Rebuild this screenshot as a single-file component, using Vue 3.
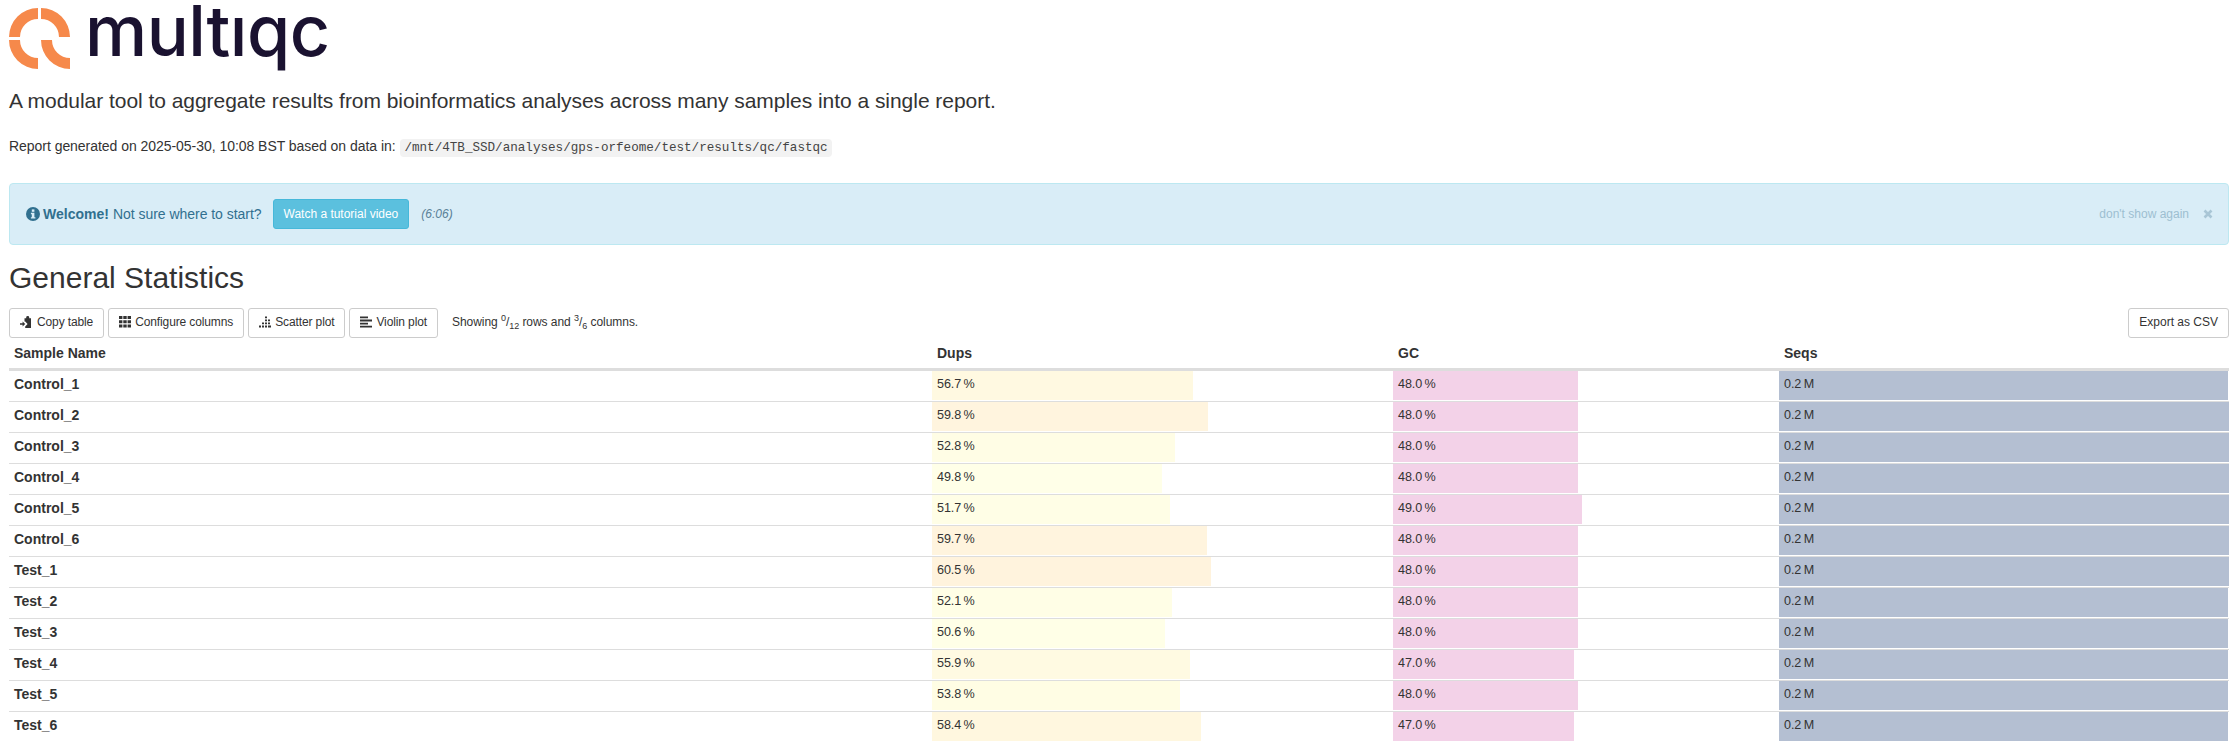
<script setup>
// rows of the general stats table
const rows = [
  { name: 'Control_1', dups: 56.7, gc: 48, seqs: 99.7 },
  { name: 'Control_2', dups: 59.8, gc: 48, seqs: 100 },
  { name: 'Control_3', dups: 52.8, gc: 48, seqs: 100 },
  { name: 'Control_4', dups: 49.8, gc: 48, seqs: 100 },
  { name: 'Control_5', dups: 51.7, gc: 49, seqs: 100 },
  { name: 'Control_6', dups: 59.7, gc: 48, seqs: 100 },
  { name: 'Test_1', dups: 60.5, gc: 48, seqs: 100 },
  { name: 'Test_2', dups: 52.1, gc: 48, seqs: 99.8 },
  { name: 'Test_3', dups: 50.6, gc: 48, seqs: 99.8 },
  { name: 'Test_4', dups: 55.9, gc: 47, seqs: 99.8 },
  { name: 'Test_5', dups: 53.8, gc: 48, seqs: 99.8 },
  { name: 'Test_6', dups: 58.4, gc: 47, seqs: 99.8 }
]

// pale yellow to pale orange, like the report's colour scale
const dupsColour = (v) => {
  const t = (v - 49.8) / (60.5 - 49.8)
  const g = Math.round(255 - Math.pow(t, 1.6) * 12)
  const b = Math.round(232 - t * 11)
  return `rgb(255, ${g}, ${b})`
}
</script>

<template>
  <div class="page">
    <div class="brand">
      <svg class="logo" width="70" height="76" viewBox="9 0 70 76">
        <path d="M9 37A29 29 0 0 1 38 8V19A18 18 0 0 0 20 37Z" />
        <path d="M41 8A29 29 0 0 1 70 37H59A18 18 0 0 0 41 19Z" />
        <path d="M9 40H20A18 18 0 0 0 38 58V69A29 29 0 0 1 9 40Z" />
        <path d="M41 40H52A18 18 0 0 0 70 58V69A29 29 0 0 1 41 40Z" />
      </svg>
      <span class="wordmark">multıqc</span>
    </div>

    <p class="lead">A modular tool to aggregate results from bioinformatics analyses across many samples into a single report.</p>
    <p class="generated">
      Report generated on 2025-05-30, 10:08 BST based on data in:
      <code>/mnt/4TB_SSD/analyses/gps-orfeome/test/results/qc/fastqc</code>
    </p>

    <div class="alert">
      <svg class="info" width="14" height="14" viewBox="0 0 14 14">
        <circle cx="7" cy="7" r="7" fill="#31708f" />
        <rect x="5.8" y="2.4" width="2.6" height="2.4" fill="#d9edf7" />
        <path d="M4.9 5.8H8.4V10.2H9.4V11.6H4.9V10.2H5.8V7.2H4.9Z" fill="#d9edf7" />
      </svg>
      <strong>Welcome!</strong>
      <span class="ask">Not sure where to start?</span>
      <a class="watch">Watch a tutorial video</a>
      <em class="length">(6:06)</em>
      <span class="dismiss">don't show again</span>
      <svg class="close" width="10" height="10" viewBox="0 0 10 10">
        <path d="M1.5 1.5L8.5 8.5M8.5 1.5L1.5 8.5" stroke="#a9c6d6" stroke-width="2.6" />
      </svg>
    </div>

    <h1>General Statistics</h1>

    <div class="toolbar">
      <button class="btn">
        <svg width="13" height="12" viewBox="0 0 13 12" fill="#333">
          <path d="M4.5 2.2H6.2V1.2Q6.2 0 7.7 0T9.2 1.2V2.2H11V12H5.2V10.6L7.6 8 5.2 5.4H4.5Z" />
          <path d="M0 7.2H2.6V5.6L5.2 8 2.6 10.4V8.8H0Z" />
        </svg>
        Copy table
      </button>
      <button class="btn">
        <svg width="12" height="12" viewBox="0 0 12 12" fill="#333">
          <path d="M0 0H3.4V3H0ZM4.3 0H7.7V3H4.3ZM8.6 0H12V3H8.6ZM0 4.3H3.4V7.3H0ZM4.3 4.3H7.7V7.3H4.3ZM8.6 4.3H12V7.3H8.6ZM0 8.6H3.4V11.6H0ZM4.3 8.6H7.7V11.6H4.3ZM8.6 8.6H12V11.6H8.6Z" />
        </svg>
        Configure columns
      </button>
      <button class="btn">
        <svg width="12" height="12" viewBox="0 0 12 12" fill="#333">
          <path d="M6 .5H8V2.3H6ZM6 3.5H8V5.3H6ZM9 3.5H11V5.3H9ZM3 6.5H5V8.3H3ZM6 6.5H8V8.3H6ZM9 6.5H11V8.3H9ZM0 9.5H2V11.5H0ZM3 9.5H5V11.5H3ZM6 9.5H8V11.5H6ZM9 9.5H12V11.5H9Z" />
        </svg>
        Scatter plot
      </button>
      <button class="btn">
        <svg width="12" height="12" viewBox="0 0 12 12" fill="#333">
          <path d="M0 .5H8V2.3H0ZM0 3.6H12V5.4H0ZM0 6.7H8V8.5H0ZM0 9.8H12V11.6H0Z" />
        </svg>
        Violin plot
      </button>
      <span class="showing">
        Showing <sup>0</sup>/<sub>12</sub> rows and <sup>3</sup>/<sub>6</sub> columns.
      </span>
      <button class="btn export">Export as CSV</button>
    </div>

    <table>
      <colgroup>
        <col class="c-name" />
        <col class="c-dups" />
        <col class="c-gc" />
        <col class="c-seqs" />
      </colgroup>
      <thead>
        <tr>
          <th>Sample Name</th>
          <th>Dups</th>
          <th>GC</th>
          <th>Seqs</th>
        </tr>
      </thead>
      <tbody>
        <tr v-for="row in rows" :key="row.name">
          <th>{{ row.name }}</th>
          <td>
            <div class="bar" :style="{ width: row.dups + '%', background: dupsColour(row.dups) }">{{ row.dups.toFixed(1) }}&#8201;%</div>
          </td>
          <td>
            <div class="bar gc" :style="{ width: row.gc + '%' }">{{ row.gc.toFixed(1) }}&#8201;%</div>
          </td>
          <td>
            <div class="bar seqs" :style="{ width: row.seqs + '%' }">0.2&#8201;M</div>
          </td>
        </tr>
      </tbody>
    </table>
  </div>
</template>

<style>
html,
body {
  margin: 0;
  background: #fff;
}
</style>

<style scoped>
.page {
  padding: 0 9px;
  height: 748px;
  overflow: hidden;
  box-sizing: border-box;
  color: #333;
  font-family: "Liberation Sans", Arial, sans-serif;
  font-size: 14px;
  line-height: 20px;
}

.brand {
  display: flex;
  height: 76px;
}

.logo path {
  fill: #f6894b;
}

.wordmark {
  margin-left: 6px;
  font-family: Inter, sans-serif;
  font-size: 70px;
  font-weight: 500;
  line-height: 62px;
  color: #1a1230;
  letter-spacing: -0.5px;
}

.lead {
  margin: 10px 0 0;
  font-size: 21px;
  line-height: 30px;
  letter-spacing: -0.04px;
}

.generated {
  margin: 20px 0 0;
  letter-spacing: -0.04px;
}

code {
  padding: 2px 4px;
  margin-left: 1px;
  font-family: "Liberation Mono", monospace;
  font-size: 12.6px;
  letter-spacing: 0;
  color: #444;
  background: #f2f2f2;
  border-radius: 4px;
}

.alert {
  display: flex;
  align-items: center;
  height: 62px;
  margin-top: 25px;
  padding: 0 15px 0 16px;
  box-sizing: border-box;
  color: #31708f;
  background: #d9edf7;
  border: 1px solid #bce8f1;
  border-radius: 4px;
}

.info {
  margin-right: 3px;
}

.ask {
  margin-left: 4px;
  letter-spacing: -0.03px;
}

.watch {
  margin-left: 11px;
  padding: 5px 10px;
  font-size: 12px;
  line-height: 18px;
  letter-spacing: -0.01px;
  color: #fff;
  background: #5bc0de;
  border: 1px solid #46b8da;
  border-radius: 3px;
}

.length {
  margin-left: 12px;
  font-size: 12px;
  color: #5a8198;
}

.dismiss {
  margin-left: auto;
  font-size: 12px;
  color: #9dbfd1;
}

.close {
  margin-left: 14px;
}

h1 {
  margin: 16px 0 0;
  font-size: 30px;
  font-weight: 400;
  line-height: 33px;
}

.toolbar {
  display: flex;
  align-items: center;
  gap: 4px;
  margin-top: 14px;
}

.btn {
  display: flex;
  align-items: center;
  gap: 4px;
  height: 30px;
  padding: 0 10px 3px;
  font-family: inherit;
  font-size: 12px;
  letter-spacing: -0.12px;
  color: #333;
  background: #fff;
  border: 1px solid #ccc;
  border-radius: 3px;
}

.showing {
  margin-left: 10px;
  padding-bottom: 3px;
  font-size: 12px;
  letter-spacing: -0.05px;
}

.showing sup,
.showing sub {
  font-size: 9px;
  line-height: 0;
}

.export {
  margin-left: auto;
  letter-spacing: 0;
}

table {
  width: 100%;
  table-layout: fixed;
  border-collapse: collapse;
}

.c-name {
  width: 923px;
}

.c-dups {
  width: 461px;
}

.c-gc {
  width: 386px;
}

thead th {
  height: 30px;
  padding: 0 5px;
  text-align: left;
  border-bottom: 3px solid #ddd;
}

tbody th {
  padding: 0 5px 4px;
  text-align: left;
  border-top: 1px solid #ddd;
}

tbody tr:first-child th,
tbody tr:first-child td {
  border-top: 0;
}

td {
  height: 29px;
  padding: 0 0 1px;
  vertical-align: top;
  border-top: 1px solid #ddd;
}

.bar {
  box-sizing: border-box;
  height: 29px;
  padding-left: 5px;
  font-size: 12.6px;
  line-height: 27px;
  letter-spacing: -0.1px;
  white-space: nowrap;
}

.gc {
  background: #f3d2e8;
}

.seqs {
  background: #b4bfd2;
}
</style>
